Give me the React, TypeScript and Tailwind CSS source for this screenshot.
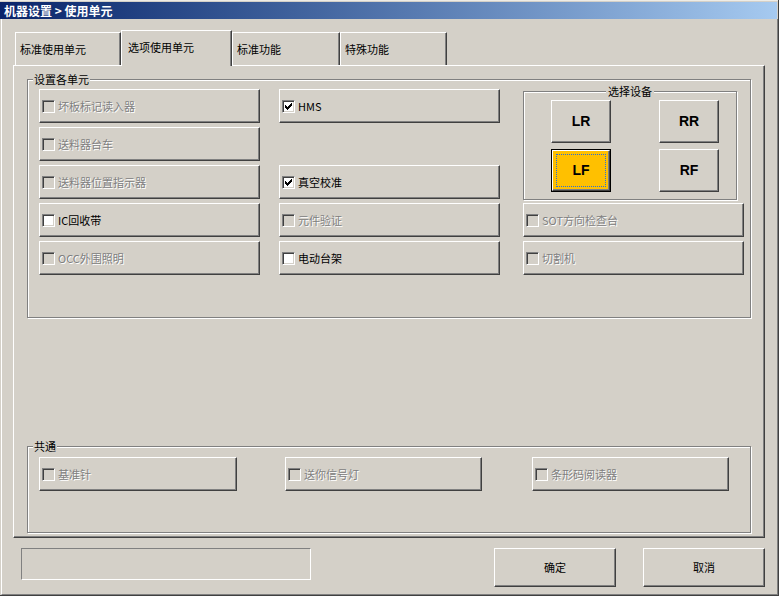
import React from 'react';

const raised =
  'border border-t-white border-l-white border-r-[#404040] border-b-[#404040] shadow-[inset_-1px_-1px_0_#808080]';
const etched = 'border border-[#808080] shadow-[inset_1px_1px_0_#fff,1px_1px_0_#fff]';
const grayText = 'text-[#808080] [text-shadow:1px_1px_0_#fff]';

function Check({ checked, disabled }: { checked?: boolean; disabled?: boolean }) {
  const cols = [2, 3, 4, 3, 2, 1, 0];
  return (
    <span
      className={`w-[13px] h-[13px] shrink-0 border border-t-[#808080] border-l-[#808080] border-r-white border-b-white shadow-[inset_1px_1px_0_#404040,inset_-1px_-1px_0_#d4d0c8] flex items-center justify-center ${
        disabled ? 'bg-[#d4d0c8]' : 'bg-white'
      }`}
    >
      {checked && (
        <svg width="7" height="7" viewBox="0 0 7 7" shapeRendering="crispEdges">
          {cols.map((y, x) => (
            <rect key={x} x={x} y={y} width="1" height="3" fill="#000" />
          ))}
        </svg>
      )}
    </span>
  );
}

function CheckButton({
  label,
  checked,
  disabled,
  w = 'w-[221px]',
}: {
  label: string;
  checked?: boolean;
  disabled?: boolean;
  w?: string;
}) {
  return (
    <div className={`${w} h-[34px] ${raised} flex items-center pl-[2px] gap-[3px]`}>
      <Check checked={checked} disabled={disabled} />
      <span className={`leading-none ${disabled ? grayText : 'text-black'}`}>{label}</span>
    </div>
  );
}

function DevButton({ label, selected }: { label: string; selected?: boolean }) {
  if (selected) {
    return (
      <div className="h-[43px] border border-black">
        <div className={`relative h-full ${raised} bg-[#ffc000] flex items-center justify-center`}>
          <span className="absolute inset-[3px] border border-dotted border-[#2a6fd8]" />
          <span className="font-['Liberation_Sans',sans-serif] font-bold text-[14px] text-black">{label}</span>
        </div>
      </div>
    );
  }
  return (
    <div
      className={`h-[43px] ${raised} shadow-[inset_-1px_-1px_0_#808080,inset_1px_1px_0_#fff] flex items-center justify-center`}
    >
      <span className="font-['Liberation_Sans',sans-serif] font-bold text-[14px] text-black">{label}</span>
    </div>
  );
}

function Tab({ label, w, selected }: { label: string; w: string; selected?: boolean }) {
  if (selected) {
    return (
      <div
        className={`${w} h-[36px] relative z-10 bg-[#d4d0c8] border-t border-l border-r border-t-white border-l-white border-r-[#404040] shadow-[inset_-1px_0_0_#808080] flex items-center pl-[6px] pb-[3px]`}
      >
        {label}
      </div>
    );
  }
  return (
    <div
      className={`${w} h-[33px] mt-[2px] border-t border-l border-r border-t-white border-l-white border-r-[#404040] shadow-[inset_-1px_0_0_#808080] flex items-center pl-[4px] pt-[1px]`}
    >
      {label}
    </div>
  );
}

export default function App() {
  return (
    <div className="w-[779px] h-[596px] bg-[#d4d0c8] border-r border-b border-r-[#404040] border-b-[#404040] flex flex-col font-['Noto_Sans_CJK_SC','Noto_Sans',sans-serif] text-[11px] text-black overflow-hidden">
      <div className="h-[2px] shrink-0 border-t border-t-[#eeece6]" />
      <div className="h-[17px] shrink-0 w-[777px] bg-linear-to-r from-[#0a246a] to-[#a6caf0] flex items-center pl-[4px] text-white font-bold text-[12px]">
        机器设置 &gt; 使用单元
      </div>
      <div className="flex-1 ml-[1px] border-l border-l-white border-r border-r-[#808080] border-b border-b-[#808080] flex flex-col pt-[11px]">
        {/* tabs */}
        <div className="flex items-start h-[35px] pl-[13px]">
          <Tab label="标准使用单元" w="w-[106px]" />
          <Tab label="选项使用单元" w="w-[111px]" selected />
          <Tab label="标准功能" w="w-[108px]" />
          <Tab label="特殊功能" w="w-[107px]" />
        </div>
        {/* panel */}
        <div
          className={`ml-[11px] w-[752px] h-[473px] shrink-0 ${raised} pl-[13px] pt-[13px] flex flex-col`}
        >
          {/* group 1 */}
          <div className={`relative w-[724px] h-[239px] ${etched} pl-[11px] pt-[9px]`}>
            <span className="absolute left-[5px] -top-[8px] px-[1px] bg-[#d4d0c8] leading-[14px]">设置各单元</span>
            <div className="flex">
              <div className="flex flex-col gap-[4px]">
                <CheckButton label="坏板标记读入器" disabled />
                <CheckButton label="送料器台车" disabled />
                <CheckButton label="送料器位置指示器" disabled />
                <CheckButton label="IC回收带" />
                <CheckButton label="OCC外围照明" disabled />
              </div>
              <div className="ml-[19px] flex flex-col gap-[4px]">
                <CheckButton label="HMS" checked />
                <div className="h-[34px]" />
                <CheckButton label="真空校准" checked />
                <CheckButton label="元件验证" disabled />
                <CheckButton label="电动台架" />
              </div>
              <div className="ml-[23px] flex flex-col">
                <div className={`relative mt-[2px] w-[214px] h-[109px] ${etched} pl-[27px] pt-[8px]`}>
                  <span className="absolute left-1/2 -translate-x-1/2 -top-[8px] px-[2px] bg-[#d4d0c8] leading-[14px]">
                    选择设备
                  </span>
                  <div className="grid grid-cols-[60px_60px] gap-x-[48px] gap-y-[6px]">
                    <DevButton label="LR" />
                    <DevButton label="RR" />
                    <DevButton label="LF" selected />
                    <DevButton label="RF" />
                  </div>
                </div>
                <div className="mt-[3px] flex flex-col gap-[4px]">
                  <CheckButton label="SOT方向检查台" disabled />
                  <CheckButton label="切割机" disabled />
                </div>
              </div>
            </div>
          </div>
          {/* group 2 */}
          <div className={`relative mt-[128px] w-[724px] h-[87px] ${etched} pl-[11px] pt-[10px]`}>
            <span className="absolute left-[5px] -top-[8px] px-[1px] bg-[#d4d0c8] leading-[14px]">共通</span>
            <div className="flex">
              <CheckButton label="基准针" disabled w="w-[198px]" />
              <div className="ml-[48px]">
                <CheckButton label="送你信号灯" disabled w="w-[197px]" />
              </div>
              <div className="ml-[50px]">
                <CheckButton label="条形码阅读器" disabled w="w-[197px]" />
              </div>
            </div>
          </div>
        </div>
        {/* bottom */}
        <div className="flex items-start mt-[10px]">
          <div className="ml-[19px] w-[290px] h-[32px] border border-t-[#808080] border-l-[#808080] border-r-white border-b-white" />
          <div className={`ml-[183px] w-[122px] h-[39px] ${raised} flex items-center justify-center`}>确定</div>
          <div className={`ml-[27px] w-[122px] h-[39px] ${raised} flex items-center justify-center`}>取消</div>
        </div>
      </div>
    </div>
  );
}
